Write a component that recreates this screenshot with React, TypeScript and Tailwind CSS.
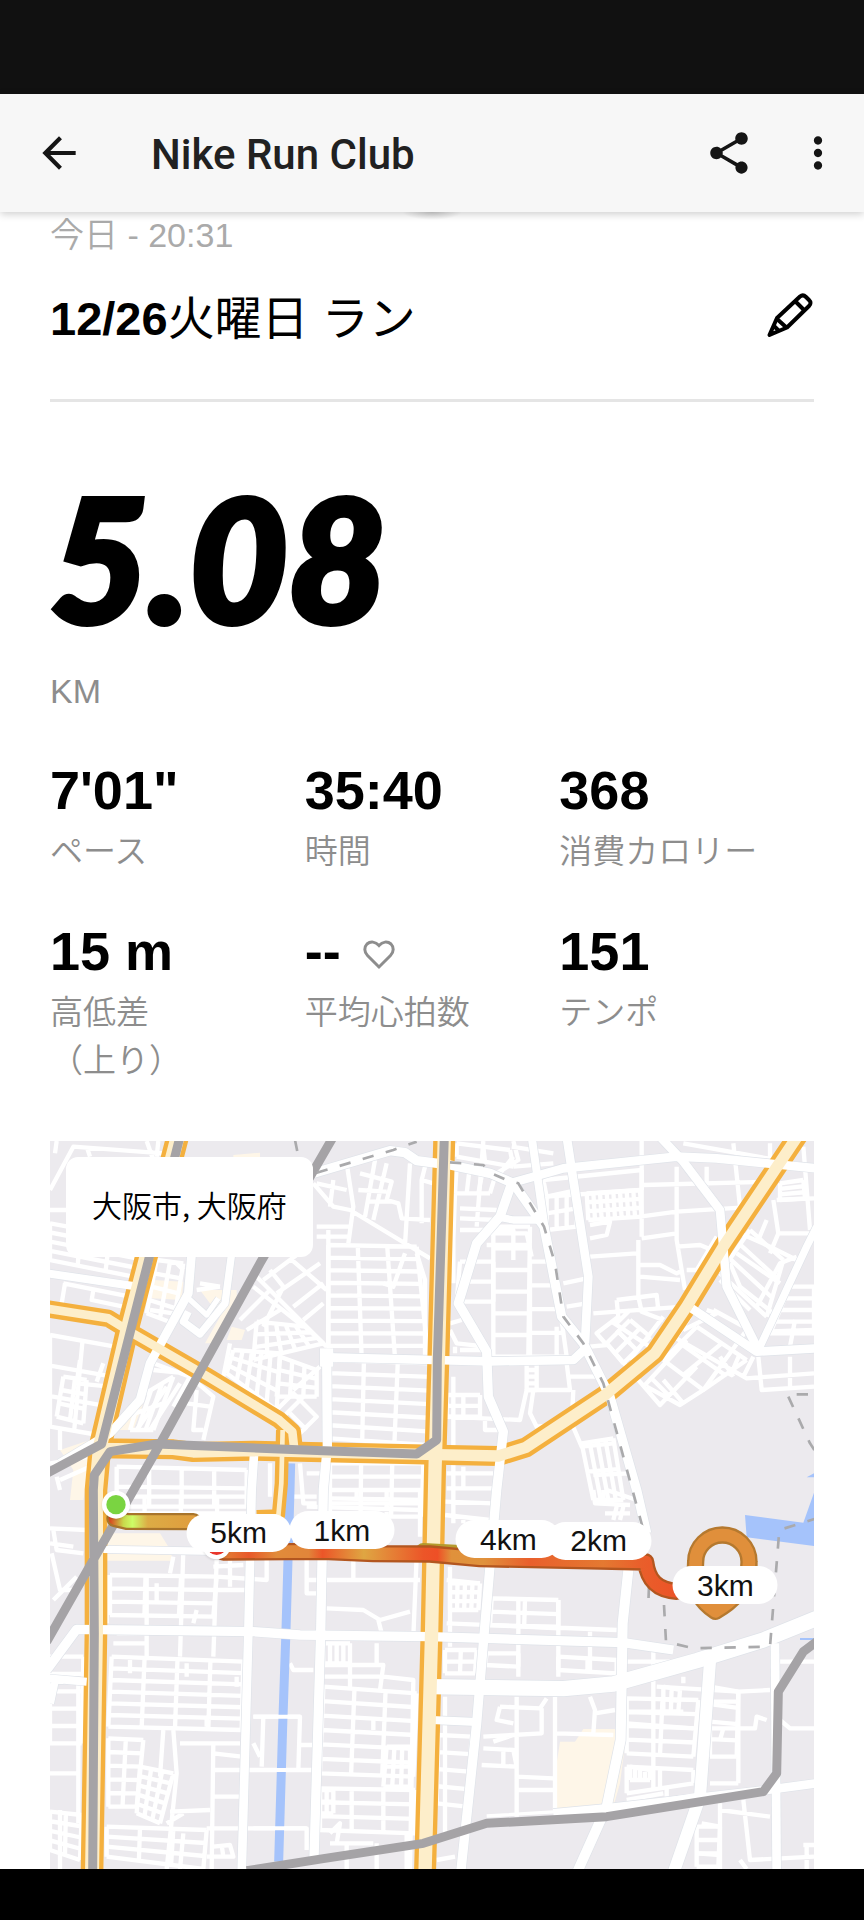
import React from "react";
import { MdArrowBack, MdMoreVert, MdShare } from "react-icons/md";

const latin = "font-['Liberation_Sans','Noto_Sans_CJK_JP',sans-serif]";

type Stat = { value: string; label: string[]; heart?: boolean };

const stats: Stat[] = [
  { value: "7'01\"", label: ["ペース"] },
  { value: "35:40", label: ["時間"] },
  { value: "368", label: ["消費カロリー"] },
  { value: "15 m", label: ["高低差", "（上り）"] },
  { value: "--", label: ["平均心拍数"], heart: true },
  { value: "151", label: ["テンポ"] },
];

// A block of side streets: four corners (clockwise from top left), columns, rows.
type Block = [number, number, number, number, number, number, number, number, number, number];

function blockPath([x1, y1, x2, y2, x3, y3, x4, y4, cols, rows]: Block): string {
  let d = "";
  for (let i = 0; i <= cols; i++) {
    const t = i / cols;
    d += `M${x1 + (x2 - x1) * t} ${y1 + (y2 - y1) * t}L${x4 + (x3 - x4) * t} ${y4 + (y3 - y4) * t}`;
  }
  for (let i = 0; i <= rows; i++) {
    const t = i / rows;
    d += `M${x1 + (x4 - x1) * t} ${y1 + (y4 - y1) * t}L${x2 + (x3 - x2) * t} ${y2 + (y3 - y2) * t}`;
  }
  return d;
}

type Tile = { x: number; y: number; blocks: Block[]; lanes: string };

const tiles: Tile[] = [
  {
    x: 0,
    y: 0,
    blocks: [
      [865, 345, 1130, 350, 1165, 685, 865, 685, 3, 9],
      [870, 690, 1175, 700, 1160, 945, 870, 925, 3, 6],
      [650, 575, 795, 590, 850, 640, 640, 690, 5, 3],
      [580, 660, 720, 670, 710, 840, 560, 730, 5, 3],
      [720, 680, 830, 720, 830, 800, 710, 800, 3, 3],
      [30, 615, 225, 650, 175, 915, 30, 890, 2, 3],
      [70, 740, 140, 750, 130, 880, 50, 860, 2, 3],
      [30, 280, 300, 330, 280, 440, 30, 390, 3, 4],
      [870, 1000, 1150, 1000, 1145, 1160, 870, 1160, 3, 4],
      [230, 1010, 620, 1020, 620, 1130, 230, 1130, 4, 2],
      [350, 390, 430, 400, 400, 580, 320, 550, 2, 4],
      [300, 800, 400, 740, 340, 900, 270, 900, 3, 2],
    ],
    lanes:
      "M650 440L860 650M640 470L790 590M750 385L860 480M670 450L790 360M710 490L840 400M760 530L850 460M790 570L850 520M690 420L730 470L670 590M600 570L690 480M620 600L720 540M820 160L880 230L930 240L1170 385M880 150L870 230M920 100L940 230L925 340M830 160L920 180M830 290H930M830 320H925M865 300V650M1005 90L975 260M1040 100L1000 270M960 130L1055 155L1040 210L1075 220L1085 265L1170 270M955 180L1040 185M980 215L1060 215M1110 100L1095 345M1155 110L1145 150L1180 160M1145 150V280M1095 370L1060 470L1030 460M1130 370L1155 450V690M30 180L100 50L370 70M50 33L45 70M140 50L150 80M320 33L340 90M355 33L350 80M30 240H80M70 460L270 500M75 460L65 520M160 480L155 510L250 530M330 540L400 550M340 700L450 740L520 800L490 930M450 740L400 830M420 760L330 900M470 780L460 900H490M380 770L290 900M440 820L510 830M340 720L440 730M570 640L550 740M710 840L760 790L830 860L780 910M750 850L800 900M760 780L840 710M730 860L790 800M60 900V960M120 690L110 760L210 770M190 700L170 755M30 1000L150 980M60 1050L150 1010M50 1040L60 1080M410 400L430 420M470 480L540 470M780 1000L790 1120L830 1120M800 1030H860M690 1000V1100M480 460L540 470",
  },
  {
    x: 1170,
    y: 0,
    blocks: [
      [80, 40, 240, 60, 250, 110, 80, 80, 2, 1],
      [80, 110, 195, 140, 180, 190, 75, 190, 3, 1],
      [190, 290, 300, 290, 295, 680, 190, 680, 1, 6],
      [90, 395, 190, 395, 190, 515, 80, 515, 1, 2],
      [300, 395, 370, 395, 410, 680, 300, 680, 1, 4],
      [350, 200, 440, 180, 440, 290, 350, 300, 3, 2],
      [470, 190, 630, 180, 635, 260, 475, 270, 8, 3],
      [340, 150, 635, 120, 635, 180, 350, 200, 1, 1],
      [800, 590, 950, 690, 820, 780, 700, 690, 2, 2],
      [960, 300, 1060, 390, 1010, 560, 870, 430, 1, 3],
      [1080, 470, 1152, 470, 1152, 610, 1020, 610, 1, 4],
      [290, 700, 320, 700, 320, 780, 290, 780, 1, 4],
      [50, 795, 150, 795, 150, 860, 50, 860, 2, 2],
      [455, 940, 550, 925, 580, 1110, 490, 1110, 4, 2],
      [1050, 160, 1120, 150, 1125, 205, 1050, 210, 1, 3],
      [530, 640, 600, 570, 660, 620, 580, 700, 2, 2],
    ],
    lanes:
      "M160 33L140 290M75 190L70 330V460M90 235L200 240M90 265L200 270M90 300H250V390M180 310H290L305 380M170 345H300M250 33L265 90L200 130M245 50L370 70M250 110L370 100M210 130L250 80M635 33V320M740 110V330L765 480M830 110V170M640 165L1020 155M630 260L740 245L980 230M635 325L740 310M625 330V500M480 380L620 370M480 325L530 315L540 275L480 285M630 405H690L740 430L760 420M630 440L750 450M740 350L810 345L870 370M770 420H800L860 320M760 40L1152 110M910 40L930 230M1020 40V80M1120 50L1140 300M1030 210L1045 310L1020 370M1050 310H1140M1040 210L1152 205M985 330L1010 270M930 310L1020 350L1100 390M920 370L1050 460M900 400L930 470L1030 550M1100 380L1050 400L980 530M400 460L470 445M410 530L470 520M490 550L760 530M560 510L680 495L685 540M560 510L565 560L500 610L530 645L480 650M625 500L635 545L700 570M545 575L720 690M600 540L560 580M530 640L690 825L800 710M640 770L770 630M700 560L600 690M560 600L600 640M650 770L750 825L820 780L950 600M730 620L950 745L1152 730M720 800L660 740M760 600L860 550L830 540M780 560L740 620M850 540L960 600M870 450L960 540M700 750L760 820M870 680L910 740M985 680L995 780L1152 770M1080 680V770M970 680L940 740M930 670L900 740M1095 570L1080 650M1000 605L1152 600M60 580L95 570M60 600L80 640L170 650M75 650V670M90 660H165M310 780L300 850L320 890L430 880M50 860L270 870L290 780H420L410 700M410 740H510M430 780L425 880L455 950L550 940M70 740V1080M165 860V900H215M380 590V690M50 1030H190M50 1075H190M100 1080V1010M490 1035L600 1030M620 1110L530 1080",
  },
  {
    x: 0,
    y: 1080,
    blocks: [
      [215, 500, 610, 515, 605, 720, 205, 710, 4, 6],
      [205, 20, 640, 20, 640, 70, 205, 70, 4, 1],
      [210, 255, 530, 260, 520, 380, 210, 375, 3, 3],
      [30, 500, 130, 500, 125, 760, 30, 760, 1, 5],
      [30, 965, 125, 975, 120, 1110, 30, 1080, 2, 4],
      [205, 745, 310, 750, 290, 950, 205, 950, 2, 5],
      [300, 830, 400, 850, 360, 1000, 290, 970, 3, 5],
      [200, 1010, 500, 1020, 490, 1137, 200, 1100, 3, 3],
      [850, 590, 1130, 610, 1120, 860, 840, 850, 3, 6],
      [840, 895, 1125, 900, 1125, 1030, 840, 1020, 3, 3],
      [1040, 770, 1110, 770, 1110, 890, 1030, 890, 3, 2],
      [840, 900, 880, 900, 880, 970, 840, 970, 2, 2],
      [850, 460, 930, 460, 930, 520, 850, 520, 4, 1],
    ],
    lanes:
      "M30 115L140 120M40 120L50 180L130 190M30 160L100 170M35 190L60 300L110 300M110 260L40 330M200 255V400M320 260V500M430 180L420 500M530 210L520 500M470 360L460 400M400 200L390 250M350 280V340M230 430H320V490M220 460H320M520 300H620M570 210V290M680 210V270L530 260M520 230L610 225M640 680H780L775 840M670 680L665 830M640 760L660 800M520 790L605 800M520 760L515 1137M520 840H820M520 920H600M500 1015H800V1080M800 190V310H840M800 270H1140M940 210V270M1130 200L1120 440M860 355L970 360L1020 390L1110 365M1015 390L1025 430M1010 460V520M850 525H1030L1020 600M850 560H930L1030 560L1120 570L1110 1137M930 520V600M1000 690V720M750 520L760 540H820M780 765H830M400 720L410 850L380 1137M370 720L360 860M420 760H600M390 965L510 960M380 1000L430 970M430 1030L420 1137M270 510V550M440 520V560M590 560V590M500 680V710M870 1060H1000M920 1060V1137M1010 1060V1137M1100 1030V1137M520 1070L570 1065L580 1100H500M545 1065L550 1100M870 1030L900 1000L890 1060M30 850H120M60 960V1137M115 580V1000M750 20H830M800 50L1140 60M870 25L1150 30M950 0V20M1040 0V150M1140 0V140",
  },
  {
    x: 1170,
    y: 1080,
    blocks: [
      [60, 280, 150, 280, 145, 360, 60, 360, 4, 3],
      [185, 325, 385, 330, 385, 415, 180, 405, 2, 2],
      [170, 490, 265, 490, 265, 530, 165, 525, 1, 1],
      [385, 500, 560, 510, 560, 550, 385, 540, 2, 1],
      [45, 480, 140, 480, 135, 550, 45, 550, 2, 2],
      [590, 625, 805, 630, 790, 800, 590, 790, 2, 4],
      [590, 830, 790, 840, 790, 880, 590, 910, 2, 1],
      [840, 590, 925, 605, 920, 800, 840, 800, 1, 4],
      [25, 735, 125, 740, 110, 950, 20, 940, 1, 4],
      [600, 830, 660, 840, 660, 870, 600, 870, 4, 1],
      [800, 1010, 870, 1010, 865, 1130, 800, 1130, 1, 3],
      [700, 590, 750, 600, 745, 665, 700, 665, 2, 2],
    ],
    lanes:
      "M45 35L190 40M70 0V100M45 75L180 90M60 230V470M100 100V80M50 270L150 280M50 400L560 420M265 330V560M385 330V560M160 405L380 410M480 425V550M490 0L495 40L600 45M520 0V40M560 50L550 90M580 50L570 90M525 70H600M45 620V1040M260 620V980M375 620V960M210 650L200 690L250 700M210 650L330 655L350 625M335 655V730L160 740M380 730L550 735M160 775L250 780L260 830L155 825M220 780V825M190 755L250 735M260 860L370 865M265 900H370M480 620L495 660L490 730M495 670L555 660M670 480V900M590 515H720M760 560V580M680 590L925 605L1020 600M925 605V880M840 635H925M840 715H975L980 680L1010 690M1050 690L1080 715H1152M880 715L870 750M1045 515H1152M870 940V1137M940 930L960 1110L1152 1100M870 960L1020 980M815 1000L870 1010M930 1110L950 1137M1130 1060V1137M1120 1065H1152M800 1090L870 1095M840 880H925M710 890V920M590 930L700 910M20 1110L75 1100M590 700L790 715M590 665H760",
  },
];

const majorRoads: { d: string; w: number }[] = [
  { d: "M20 430L280 468", w: 24 },
  { d: "M455 370L445 490L330 700L300 810L210 910L60 1000", w: 26 },
  { d: "M575 370L555 520L480 612L430 575L445 545", w: 22 },
  { d: "M440 500L500 555L535 505", w: 16 },
  { d: "M860 660L862 950L850 1080L842 1510L822 2185", w: 28 },
  { d: "M860 655L860 710", w: 40 },
  { d: "M860 682L1180 690L1350 694L1600 690L1632 660", w: 26 },
  { d: "M642 975L635 1080L625 1510L605 2230", w: 26 },
  { d: "M820 130L1050 62L1095 68L1130 92L1230 105L1350 130L1420 160L1512 290L1565 560L1630 640L1710 800L1790 1080L1820 1210", w: 28 },
  { d: "M1420 157L1570 115L1910 80L2030 85L2330 115", w: 26 },
  { d: "M1475 20L1515 300", w: 24 },
  { d: "M1580 20L1600 150L1645 440L1635 640", w: 26 },
  { d: "M1415 160L1380 260L1310 340L1255 520L1340 665L1345 800L1390 905L1370 1080L1335 1480L1310 1780L1262 2230", w: 28 },
  { d: "M1380 262L1420 270L1515 270", w: 22 },
  { d: "M1860 20L1930 95L2040 240L2060 470L2155 660", w: 26 },
  { d: "M1955 535L2150 665L2330 655", w: 26 },
  { d: "M2330 290L2300 350L2160 650", w: 22 },
  { d: "M20 1620L110 1498L640 1505L780 1515L1170 1520L1750 1538L1900 1560", w: 28 },
  { d: "M70 1650L45 1650L30 1720M20 1645L140 1655", w: 24 },
  { d: "M190 1258L530 1264", w: 22 },
  { d: "M1175 1670L1570 1676L1720 1662L1970 1592L2170 1530L2330 1465", w: 46 },
  { d: "M1765 1320L1748 1480L1742 1830L1700 2030L1610 2230", w: 30 },
  { d: "M2010 1595L1980 2000L1900 2230", w: 36 },
  { d: "M2205 1540L2210 2230", w: 26 },
  { d: "M1175 1770L1310 1776", w: 24 },
  { d: "M1540 2050L1700 2035L2140 1985L2330 1960", w: 26 },
];

const highways: { d: string; w: number }[] = [
  { d: "M413 20L262 600L180 950L168 1080L168 1500L156 2230", w: 68 },
  { d: "M20 536L205 565L270 605L500 738L715 868L757 905L762 950", w: 52 },
  { d: "M728 900L724 1060L715 1158L650 1160", w: 40 },
  { d: "M170 955L400 958L460 966L640 962L1190 974L1375 978L1458 952L1695 795L1845 670L1940 530L2050 350L2285 0", w: 60 },
  { d: "M1213 20L1195 690L1185 1020L1175 1500L1155 2230", w: 66 },
];

const railways =
  "M420 20L185 942L20 1030M158 2230L163 1510L160 1080L163 1035L210 965L350 942L850 962L1130 972L1190 930L1192 690L1213 20M880 20L660 400L480 725L350 960L170 1272L20 1535M620 2222L850 2186L1150 2140L1340 2080L1700 2060L2170 1985L2210 1930L2215 1685L2290 1565L2330 1535";

const dashedTracks =
  "M830 128L1060 60L1130 35M1230 97L1330 105L1350 128L1400 150L1435 160L1512 290L1545 400L1570 560L1630 640L1690 760L1810 1200L1830 1290L1825 1420M1872 1425L1878 1535L1960 1555L2190 1550L2218 1200L2330 1165M2245 800L2310 940L2330 970M2270 793H2310M765 30L775 80";

const outbound =
  "M550 1266L850 1264L1000 1271L1170 1272L1320 1286L1580 1291L1817 1296C1824 1350 1850 1380 1910 1384";
const loop =
  "M1967 1295A80 80 0 1 1 2127 1295C2130 1370 2070 1420 2026 1444C1990 1420 1958 1390 1967 1295Z";

const MapDrawing = () => (
  <svg
    viewBox="30 33 2292 2184"
    preserveAspectRatio="xMidYMin slice"
    className="block h-full w-full"
    fill="none"
    strokeLinejoin="round"
    role="img"
    aria-label="ランのルート"
  >
    <defs>
      <linearGradient id="firstLeg" gradientUnits="userSpaceOnUse" x1="210" y1="0" x2="480" y2="0">
        <stop offset="0" stopColor="#d8491f" />
        <stop offset="0.15" stopColor="#c9d94c" />
        <stop offset="0.25" stopColor="#cdfc66" />
        <stop offset="0.42" stopColor="#dcac45" />
        <stop offset="1" stopColor="#e09b3d" />
      </linearGradient>
      <linearGradient id="mainLeg" gradientUnits="userSpaceOnUse" x1="530" y1="0" x2="1910" y2="0">
        <stop offset="0" stopColor="#e08a38" />
        <stop offset="0.07" stopColor="#e8582a" />
        <stop offset="0.13" stopColor="#e18b3a" />
        <stop offset="0.2" stopColor="#e1853a" />
        <stop offset="0.23" stopColor="#ec5528" />
        <stop offset="0.32" stopColor="#dfa642" />
        <stop offset="0.45" stopColor="#ec5528" />
        <stop offset="0.48" stopColor="#ee4f26" />
        <stop offset="0.51" stopColor="#e0913b" />
        <stop offset="0.58" stopColor="#e0923c" />
        <stop offset="0.68" stopColor="#e95f2c" />
        <stop offset="0.84" stopColor="#e47931" />
        <stop offset="0.92" stopColor="#e95f2b" />
        <stop offset="1" stopColor="#ec5327" />
      </linearGradient>
    </defs>
    <rect x="30" y="33" width="2292" height="2184" fill="#eceaee" />

    <g fill="#fef6e8">
      <path d="M580 75L660 68V100H580ZM340 450L430 455L425 510L335 505ZM480 480L590 480L590 520L540 640H495L540 560ZM575 590L615 600L605 630H560ZM200 1210H360L385 1250H190ZM190 1270H395V1292H190ZM60 960L150 930V1000L130 1110H90L100 1020ZM270 830L310 820L280 900H230Z" />
      <path d="M1560 1835H1605L1630 1797H1725L1755 1845L1740 1960L1720 2030L1545 2050L1550 1900Z" />
    </g>

    {tiles.map((tile) => (
      <g key={`${tile.x}-${tile.y}`} transform={`translate(${tile.x} ${tile.y})`} stroke="#fff" strokeWidth="13">
        {tile.blocks.map((block, i) => (
          <path key={i} d={blockPath(block)} />
        ))}
        <path d={tile.lanes} />
      </g>
    ))}

    <g stroke="#a5c3fb" strokeWidth="27">
      <path d="M752 1000L750 1080L738 1500L728 1790L716 2195" />
      <path d="M2115 1155L2290 1178L2322 1088L2322 1248L2120 1222Z" fill="#a5c3fb" stroke="none" />
      <path d="M2300 1042L2322 1030V1042Z" fill="#a5c3fb" stroke="none" />
      <path d="M2280 1527H2322" strokeWidth="6" />
    </g>
    <path d="M640 1760H780M520 1920H820M640 2095H800M620 1510H840" stroke="#fff" strokeWidth="12" />

    <g stroke="#dfe3e9">
      {majorRoads.map((road, i) => (
        <path key={i} d={road.d} strokeWidth={road.w + 4} />
      ))}
    </g>
    {highways.map((road, i) => (
      <path key={i} d={road.d} strokeWidth={road.w} stroke="#f4b03e" />
    ))}
    <g stroke="#fff">
      {majorRoads.map((road, i) => (
        <path key={i} d={road.d} strokeWidth={road.w} />
      ))}
    </g>
    {highways.map((road, i) => (
      <path key={i} d={road.d} strokeWidth={road.w - 26} stroke="#fdeeca" />
    ))}
    <path d="M1820 2018L1990 1990M1700 2036L1340 2058" stroke="#fff" strokeWidth="10" />
    <path d={railways} stroke="#a5a3a6" strokeWidth="27" />
    <path d={dashedTracks} stroke="#aaaaac" strokeWidth="8" strokeDasharray="34 38" />

    <g strokeLinecap="round">
      <path d="M225 1166L260 1174L460 1175" stroke="#a8742b" strokeWidth="52" />
      <path d="M225 1166L260 1174L460 1175" stroke="url(#firstLeg)" strokeWidth="38" />
      <path d="M1150 1264L1260 1270" stroke="#b59a2e" strokeWidth="50" />
      <path d={outbound} stroke="#b3561f" strokeWidth="52" />
      <path d={outbound} stroke="url(#mainLeg)" strokeWidth="38" />
      <path d={loop} stroke="#b5792f" strokeWidth="52" />
      <path d={loop} stroke="#e08f3b" strokeWidth="38" />
    </g>

    <g className="drop-shadow-md">
      <circle cx="228" cy="1124" r="42" fill="#fff" />
      <circle cx="530" cy="1246" r="42" fill="#fff" />
    </g>
    <circle cx="228" cy="1124" r="29" fill="#7ad441" />
    <circle cx="530" cy="1246" r="29" fill="#e9352b" />
  </svg>
);

const markers = [
  { text: "5km", place: "left-[24.7%] top-[53.8%]" },
  { text: "1km", place: "left-[38.2%] top-[53.5%]" },
  { text: "4km", place: "left-[60%] top-[54.7%]" },
  { text: "2km", place: "left-[71.8%] top-[54.9%]" },
  { text: "3km", place: "left-[88.4%] top-[61%]" },
];

const RunMap = () => (
  <section className="relative mt-[56px] flex-1 overflow-hidden" aria-label="マップ">
    <MapDrawing />
    {markers.map((m) => (
      <span
        key={m.text}
        className={`absolute flex h-[38px] w-[105px] -translate-x-1/2 -translate-y-1/2 items-center justify-center rounded-full bg-white text-[30px] text-[#111] ${m.place}`}
      >
        {m.text}
      </span>
    ))}
    <div className="absolute left-4 top-4 flex h-[100px] items-center rounded-xl bg-white px-[26px] pb-[6px] text-[30px] font-[350] text-black font-['Noto_Sans_CJK_JP',sans-serif]">
      大阪市, 大阪府
    </div>
  </section>
);

export default function App() {
  return (
    <div className={`flex min-h-screen flex-col bg-white ${latin}`} lang="ja">
      <div className="h-[94px] bg-[#111]" />
      <header className="relative z-10 flex h-[118px] items-center bg-[#f7f7f7] pl-[34px] pr-[21px] text-[#151515] shadow-[0_2px_8px_rgba(0,0,0,0.2)]">
        <button type="button" aria-label="戻る">
          <MdArrowBack size={50} />
        </button>
        <h1 className="ml-[67px] flex-1 pt-1 font-['Roboto',sans-serif] text-[42px] font-medium leading-[50px] text-[#212121]">
          Nike Run Club
        </h1>
        <button type="button" aria-label="共有">
          <MdShare size={50} />
        </button>
        <button type="button" aria-label="メニュー" className="ml-[39px]">
          <MdMoreVert size={50} />
        </button>
      </header>

      <main className="relative flex flex-1 flex-col px-[50px]">
        <div className="absolute left-1/2 top-0 h-[8px] w-[60px] -translate-x-1/2 bg-[radial-gradient(ellipse_at_top,rgba(0,0,0,0.18),transparent_70%)]" />
        <p className="text-[34px] font-[350] leading-[46px] text-[#aaa]">今日 - 20:31</p>
        <div className="mt-[27px] flex h-[68px] items-center justify-between">
          <h2 className="text-[47px] font-normal leading-[68px] text-black">
            <span className="font-bold">12/26</span>火曜日 ラン
          </h2>
          <button type="button" aria-label="編集" className="mb-2">
            <svg width="48" height="48" viewBox="0 0 48 48" fill="none" stroke="#000" strokeWidth="4" strokeLinejoin="round">
              <path d="M3.500 44L11 27L34 5.500Q37 3 40 6L43 9Q46 12 43 15L21 36.500Z" />
              <path d="M29 10L38.500 19.500M11 28L21 37M8 35L13 40" />
            </svg>
          </button>
        </div>
        <hr className="mt-[46px] border-t-[3px] border-[#e5e5e5]" />

        <p className="mt-[58px] font-['Lato',sans-serif] text-[170px] font-black italic leading-[194px] text-black [-webkit-text-stroke:6px_#000]">
          5.08
        </p>
        <p className="mt-[14px] text-[34px] leading-[46px] text-[#8d8d8d]">KM</p>

        <dl className="mt-[42px] grid grid-cols-3 gap-y-[41px]">
          {stats.map((s) => (
            <div key={s.label[0]} className="flex flex-col gap-1">
              <dd className="flex items-center text-[54px] font-bold leading-[68px] text-black">
                {s.value}
                {s.heart && (
                  <svg className="ml-[22px] mt-2" width="32" height="30" viewBox="0 0 32 30" fill="none" stroke="#8d8d8d" strokeWidth="3">
                    <path d="M16 27L4.500 15.500C1 12 1 7 4 4C7.500 1 12.500 1.500 16 5.500C19.500 1.500 24.500 1 28 4C31 7 31 12 27.500 15.500Z" />
                  </svg>
                )}
              </dd>
              <dt className="order-last text-[33px] font-[350] leading-[48px] text-[#8d8d8d]">
                {s.label.map((line) => (
                  <span key={line} className="block">
                    {line}
                  </span>
                ))}
              </dt>
            </div>
          ))}
        </dl>

        <RunMap />
      </main>
      <div className="h-[51px] bg-black" />
    </div>
  );
}
